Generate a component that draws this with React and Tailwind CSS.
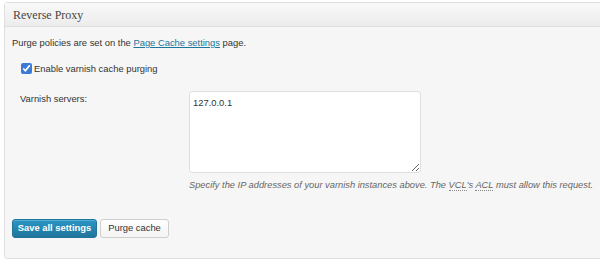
import { useState } from "react";

const App = () => {
  const [enabled, setEnabled] = useState(true);
  const [servers, setServers] = useState("127.0.0.1");

  return (
    <div className="w-[600px] h-[262px] overflow-hidden bg-white pt-[2px] pl-[4px] font-['Liberation_Sans',Arial,sans-serif]">
      {/* Postbox */}
      <div className="w-[610px] h-[257px] border border-[#dfdfdf] rounded-[3px] bg-[#f6f6f6] shadow-[inset_0_1px_0_#fff]">
        {/* Header */}
        <div className="h-[24px] flex items-center pl-[8px] border-b border-[#dfdfdf] bg-gradient-to-b from-[#f9f9f9] to-[#ececec]">
          <h3 className="text-[12px] text-[#464646] font-['Liberation_Serif',Georgia,serif] leading-none">
            Reverse Proxy
          </h3>
        </div>

        {/* Inside */}
        <div className="pl-[7px] pt-[9px] text-[9.4px] text-[#333]">
          <p className="leading-[13px]">
            Purge policies are set on the{" "}
            <a href="#" className="text-[#21759b] underline">
              Page Cache settings
            </a>{" "}
            page.
          </p>

          <label className="mt-[13px] ml-[9px] flex items-center gap-[2px] leading-[13px]">
            <input
              type="checkbox"
              checked={enabled}
              onChange={(e) => setEnabled(e.target.checked)}
              className="w-[11px] h-[11px] m-0 accent-[#3b7bd4]"
            />
            Enable varnish cache purging
          </label>

          <div className="mt-[16px] flex">
            <div className="w-[177px] shrink-0 pl-[8px] pt-[1px] leading-[13px]">Varnish servers:</div>
            <div>
              <textarea
                value={servers}
                onChange={(e) => setServers(e.target.value)}
                className="block w-[232px] h-[82px] px-[3px] py-[4px] text-[9.4px] leading-[13px] text-[#333] bg-white border border-[#dfdfdf] rounded-[3px] outline-none"
              />
              <p className="mt-[6px] italic text-[#666] text-[9.3px] leading-[13px] whitespace-nowrap">
                Specify the IP addresses of your varnish instances above. The{" "}
                <abbr title="Varnish Configuration Language" className="no-underline border-b border-dotted border-[#888]">VCL</abbr>
                's{" "}
                <abbr title="Access Control List" className="no-underline border-b border-dotted border-[#888]">ACL</abbr>{" "}
                must allow this request.
              </p>
            </div>
          </div>

          <div className="mt-[27px] flex gap-[3px]">
            <button className="h-[19px] w-[85px] rounded-[3px] border border-[#21759b] bg-gradient-to-b from-[#2a95c5] to-[#21759b] text-white font-bold text-[9.4px] shadow-[inset_0_1px_0_rgba(120,200,230,0.5)]">
              Save all settings
            </button>
            <button className="h-[19px] w-[69px] rounded-[3px] border border-[#cfcfcf] bg-gradient-to-b from-[#fefefe] to-[#f4f4f4] text-[#333] text-[9.4px]">
              Purge cache
            </button>
          </div>
        </div>
      </div>
    </div>
  );
};

export default App;
